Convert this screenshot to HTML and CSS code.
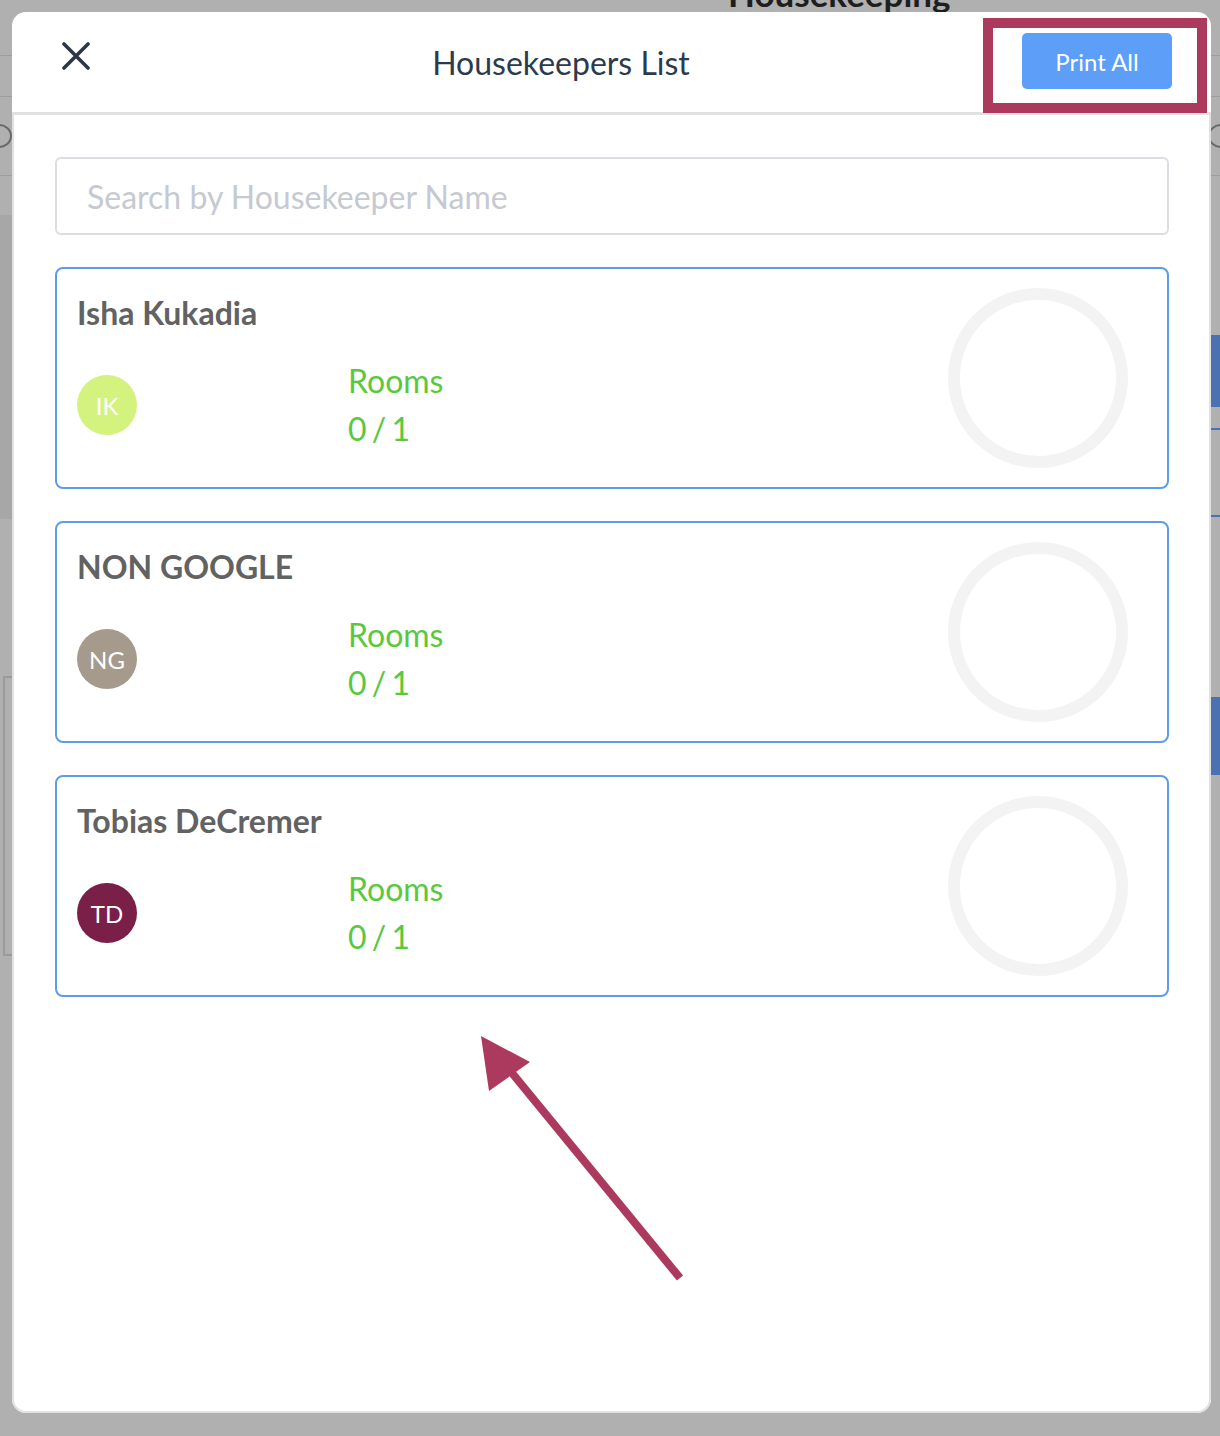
FILE: index.html
```html
<!DOCTYPE html>
<html lang="en">

<head>
    <meta charset="UTF-8">
    <meta name="viewport" content="width=device-width, initial-scale=1.0">
    <title>Housekeepers List</title>
    <link rel="stylesheet" href="styles.css">
</head>

<body>
    <!-- page behind the dialog, dimmed -->
    <div class="backdrop">
        <div class="bg-title">Housekeeping</div>
        <div class="bg-line line-1"></div>
        <div class="bg-line line-2"></div>
        <div class="bg-line line-3"></div>
        <div class="bg-ring ring-left"></div>
        <div class="bg-ring ring-right"></div>
        <div class="bg-panel"></div>
        <div class="bg-box"></div>
        <div class="bg-blue blue-1"></div>
        <div class="bg-blue blue-2"></div>
        <div class="bg-rule rule-1"></div>
        <div class="bg-rule rule-2"></div>
    </div>

    <section class="modal">
        <header class="modal-head">
            <button class="close-btn" aria-label="Close">
                <svg width="28" height="28" viewBox="0 0 28 28">
                    <path d="M2 2 L26 26 M26 2 L2 26" stroke="#2d3748" stroke-width="3.6" stroke-linecap="round" fill="none" />
                </svg>
            </button>
            <h2 class="modal-title">Housekeepers List</h2>
            <button class="print-btn">Print All</button>
        </header>

        <div class="modal-body">
            <input class="search" type="text" placeholder="Search by Housekeeper Name">

            <div class="keeper-list">
                <div class="keeper-card">
                    <div class="keeper-info">
                        <div class="keeper-name">Isha Kukadia</div>
                        <div class="keeper-row">
                            <span class="avatar av-ik">IK</span>
                            <div class="rooms">
                                <div>Rooms</div>
                                <div class="count">0 / 1</div>
                            </div>
                        </div>
                    </div>
                    <svg class="progress" width="180" height="180" viewBox="0 0 180 180">
                        <circle cx="90" cy="90" r="84" stroke="#f3f3f3" stroke-width="12" fill="none" />
                    </svg>
                </div>

                <div class="keeper-card">
                    <div class="keeper-info">
                        <div class="keeper-name">NON GOOGLE</div>
                        <div class="keeper-row">
                            <span class="avatar av-ng">NG</span>
                            <div class="rooms">
                                <div>Rooms</div>
                                <div class="count">0 / 1</div>
                            </div>
                        </div>
                    </div>
                    <svg class="progress" width="180" height="180" viewBox="0 0 180 180">
                        <circle cx="90" cy="90" r="84" stroke="#f3f3f3" stroke-width="12" fill="none" />
                    </svg>
                </div>

                <div class="keeper-card">
                    <div class="keeper-info">
                        <div class="keeper-name">Tobias DeCremer</div>
                        <div class="keeper-row">
                            <span class="avatar av-td">TD</span>
                            <div class="rooms">
                                <div>Rooms</div>
                                <div class="count">0 / 1</div>
                            </div>
                        </div>
                    </div>
                    <svg class="progress" width="180" height="180" viewBox="0 0 180 180">
                        <circle cx="90" cy="90" r="84" stroke="#f3f3f3" stroke-width="12" fill="none" />
                    </svg>
                </div>
            </div>
        </div>
    </section>

    <!-- annotation marks -->
    <div class="callout-box"></div>
    <svg class="callout-arrow" width="230" height="270" viewBox="0 0 230 270">
        <line x1="210" y1="253" x2="42" y2="48" stroke="#ab3a5e" stroke-width="8" />
        <polygon points="11,11 60,37 19,66" fill="#ab3a5e" />
    </svg>
</body>

</html>
```

FILE: styles.css
```css
* {
    box-sizing: border-box;
}

body {
    margin: 0;
    height: 1436px;
    background-color: #b0b0b0;
    font-family: Lato, "Open Sans", sans-serif;
    position: relative;
    overflow: hidden;
}

/* dimmed page behind */
.backdrop {
    position: absolute;
    inset: 0;
}

.bg-title {
    position: absolute;
    left: 728px;
    top: -28px;
    font-size: 35px;
    font-weight: 700;
    color: #1e1e1e;
}

.bg-line {
    position: absolute;
    left: 0;
    right: 0;
    height: 1px;
    background-color: #9d9d9d;
}

.line-1 {
    top: 55px;
}

.line-2 {
    top: 96px;
}

.line-3 {
    top: 175px;
}

.bg-ring {
    position: absolute;
    top: 124px;
    width: 26px;
    height: 24px;
    border: 2px solid #6a6a6a;
    border-radius: 50%;
}

.ring-left {
    left: -14px;
}

.ring-right {
    right: -14px;
}

.bg-panel {
    position: absolute;
    left: 0;
    top: 215px;
    width: 20px;
    height: 304px;
    background-color: #a7a7a7;
}

.bg-box {
    position: absolute;
    left: 3px;
    top: 676px;
    width: 30px;
    height: 280px;
    border: 2px solid #9a9a9a;
}

.bg-blue {
    position: absolute;
    right: 0;
    width: 20px;
    background-color: #4a72b2;
}

.blue-1 {
    top: 335px;
    height: 72px;
}

.blue-2 {
    top: 697px;
    height: 78px;
}

.bg-rule {
    position: absolute;
    right: 0;
    width: 20px;
    height: 2px;
    background-color: #4a72b2;
}

.rule-1 {
    top: 428px;
}

.rule-2 {
    top: 515px;
}

/* dialog */
.modal {
    position: relative;
    margin: 12px;
    width: 1199px;
    height: 1401px;
    background-color: white;
    border-radius: 14px;
    display: flex;
    flex-direction: column;
    overflow: hidden;
}

.modal-head {
    height: 103px;
    border-bottom: 3px solid #e1e1e1;
    display: flex;
    align-items: center;
    padding: 0 39px 0 50px;
}

.close-btn {
    border: none;
    background: none;
    padding: 0;
    width: 28px;
    height: 28px;
    margin-right: 10px;
    margin-top: -12px;
    display: flex;
}

.modal-title {
    flex: 1;
    margin: 0;
    text-align: center;
    font-size: 32px;
    font-weight: 400;
    color: #2c3a4d;
}

.print-btn {
    width: 150px;
    height: 56px;
    border: none;
    border-radius: 5px;
    background-color: #5c9ef8;
    color: white;
    font-family: Lato, sans-serif;
    font-size: 24px;
    margin-top: -2px;
}

.modal-body {
    flex: 1;
    border: 2px solid #e1e1e1;
    border-top: none;
    border-radius: 0 0 14px 14px;
    padding: 42px 40px 0 41px;
}

.search {
    display: block;
    width: 100%;
    height: 78px;
    border: 2px solid #dcdde2;
    border-radius: 6px;
    padding: 0 30px;
    font-family: Lato, sans-serif;
    font-size: 32px;
    color: #444;
    outline: none;
}

.search::placeholder {
    color: #c5c9d1;
}

.keeper-list {
    margin-top: 32px;
    display: flex;
    flex-direction: column;
    gap: 32px;
}

.keeper-card {
    border: 2px solid #5d9cec;
    border-radius: 8px;
    padding: 19px 39px 19px 20px;
    display: flex;
    align-items: center;
    justify-content: space-between;
}

.keeper-info {
    align-self: flex-start;
    margin-top: 7px;
}

.keeper-name {
    font-size: 32px;
    line-height: 36px;
    font-weight: 700;
    color: #626262;
}

.keeper-row {
    margin-top: 26px;
    display: flex;
    align-items: center;
}

.avatar {
    width: 60px;
    height: 60px;
    border-radius: 50%;
    display: flex;
    align-items: center;
    justify-content: center;
    color: white;
    font-size: 24px;
}

.av-ik {
    background-color: #d4f27e;
}

.av-ng {
    background-color: #a59a8c;
}

.av-td {
    background-color: #7a1f48;
}

.rooms {
    margin-left: 211px;
    font-size: 32px;
    line-height: 48px;
    color: #5ac83c;
}

.rooms .count {
    word-spacing: -3px;
}

/* annotations */
.callout-box {
    position: absolute;
    left: 983px;
    top: 18px;
    width: 224px;
    height: 95px;
    border: 10px solid #ab3a5e;
}

.callout-arrow {
    position: absolute;
    left: 470px;
    top: 1025px;
}
```
